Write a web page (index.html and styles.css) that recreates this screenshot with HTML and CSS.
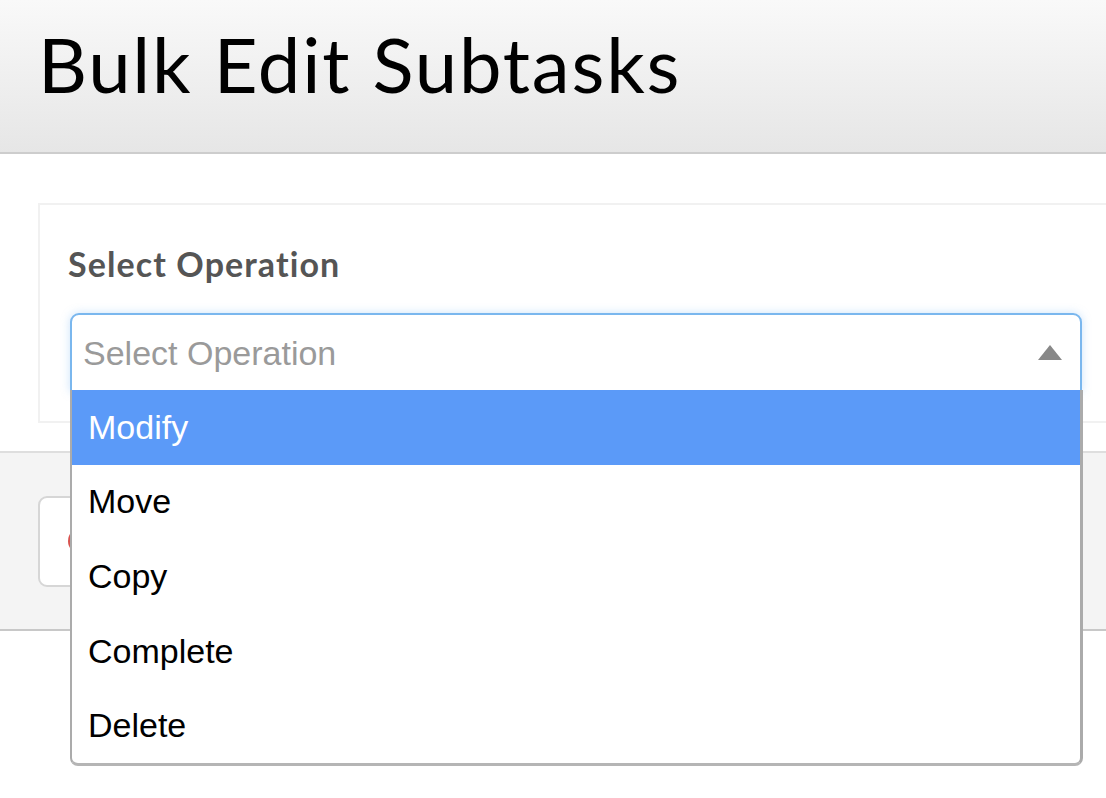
FILE: index.html
```html
<!DOCTYPE html>
<html lang="en">
<head>
<meta charset="utf-8">
<title>Bulk Edit Subtasks</title>
<link rel="stylesheet" href="styles.css">
</head>
<body>
<header class="header">
  <h1 class="title">Bulk Edit Subtasks</h1>
</header>
<main class="content">
  <section class="panel">
    <div class="label">Select Operation</div>
    <div class="select-wrap">
      <div class="select">
        <span class="placeholder">Select Operation</span>
        <span class="caret"></span>
      </div>
      <ul class="menu">
        <li class="option active">Modify</li>
        <li class="option">Move</li>
        <li class="option">Copy</li>
        <li class="option">Complete</li>
        <li class="option">Delete</li>
      </ul>
    </div>
  </section>
</main>
<footer class="footer">
  <button class="btn" aria-label="Cancel"><span class="btn-icon"></span></button>
</footer>
</body>
</html>
```
FILE: styles.css
```css
body {
  margin: 0;
  padding: 0;
  min-height: 798px;
  background: #fff;
  font-family: "Liberation Sans", Arial, sans-serif;
}

.header {
  height: 152px;
  border-bottom: 2px solid #cdcdcd;
  background: linear-gradient(#f9f9f9, #e6e6e6);
  display: flex;
  align-items: center;
  padding-left: 38px;
}

.title {
  margin: 0;
  font-family: "Lato", sans-serif;
  font-weight: 400;
  font-size: 76px;
  letter-spacing: 1.8px;
  color: #000;
  line-height: 1;
  transform: translateY(-12px);
}

.content {
  padding: 49px 0 28px 38px;
}

.panel {
  border: 2px solid #f1f1f1;
  border-right: none;
  padding: 42px 0 29px 28px;
}

.label {
  font-family: "Lato", sans-serif;
  font-weight: 700;
  font-size: 34px;
  letter-spacing: 1.1px;
  color: #555;
  line-height: 1;
  margin-bottom: 32px;
}

.select-wrap {
  position: relative;
  width: 1012px;
  margin-left: 2px;
}

.select {
  height: 73px;
  border: 2px solid #7ab7ee;
  border-radius: 9px 9px 0 0;
  box-shadow: 0 0 10px rgba(110, 175, 240, 0.35);
  display: flex;
  align-items: center;
  justify-content: space-between;
  padding: 2px 18px 0 11px;
  background: #fff;
}

.placeholder {
  font-size: 34px;
  color: #9a9a9a;
}

.caret {
  width: 0;
  height: 0;
  border-left: 12px solid transparent;
  border-right: 12px solid transparent;
  border-bottom: 15px solid #888;
  margin-top: -2px;
}

.menu {
  position: absolute;
  left: 0;
  top: 77px;
  width: 1008px;
  margin: 0;
  padding: 0;
  list-style: none;
  background: #fff;
  border-left: 2px solid #ababab;
  border-right: 3px solid #ababab;
  border-bottom: 3px solid #b5b5b5;
  border-radius: 0 0 8px 8px;
  z-index: 10;
}

.option {
  height: 74.6px;
  display: flex;
  align-items: center;
  padding-left: 16px;
  font-size: 34px;
  color: #000;
}

.option.active {
  background: #5b9af8;
  color: #fff;
}

.footer {
  height: 176px;
  background: #f4f4f4;
  border-top: 2px solid #dedede;
  border-bottom: 2px solid #c8c8c8;
  display: flex;
  align-items: center;
  padding-left: 38px;
}

.btn {
  height: 91px;
  width: 200px;
  padding: 0 0 0 28px;
  background: #fff;
  border: 2px solid #d6d6d6;
  border-radius: 9px;
  display: flex;
  align-items: center;
}

.btn-icon {
  width: 26px;
  height: 26px;
  border-radius: 50%;
  background: #d9534f;
}
```
